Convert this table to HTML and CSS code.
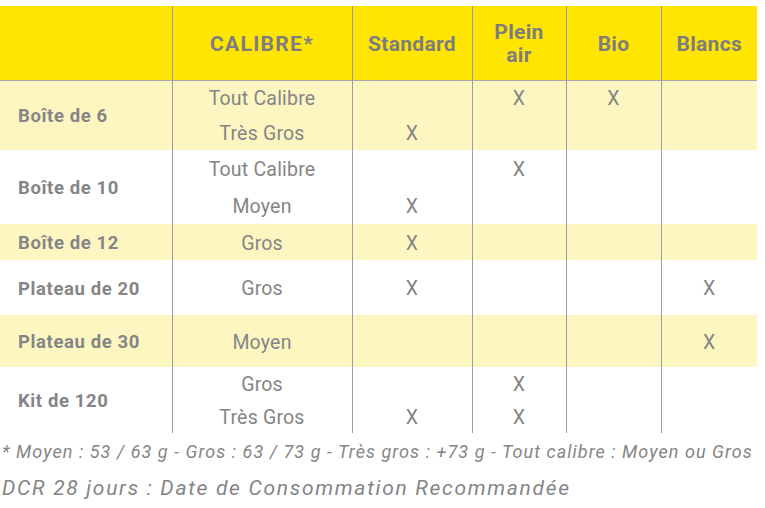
FILE: index.html
```html
<!DOCTYPE html>
<html lang="fr">
<head>
<meta charset="utf-8">
<title>Calibres</title>
<link rel="stylesheet" href="styles.css">
</head>
<body>
<div class="page">
<table class="grid">
  <colgroup>
    <col class="c1"><col class="c2"><col class="c3"><col class="c4"><col class="c5"><col class="c6">
  </colgroup>
  <thead>
    <tr class="head">
      <th></th><th class="cal">CALIBRE*</th><th>Standard</th><th>Plein<br>air</th><th>Bio</th><th>Blancs</th>
    </tr>
  </thead>
  <tbody class="yel">
    <tr class="r35"><td class="label" rowspan="2">Boîte de 6</td><td>Tout Calibre</td><td></td><td>X</td><td>X</td><td></td></tr>
    <tr class="r35"><td>Très Gros</td><td>X</td><td></td><td></td><td></td></tr>
  </tbody>
  <tbody class="wht">
    <tr class="r37"><td class="label" rowspan="2">Boîte de 10</td><td>Tout Calibre</td><td></td><td>X</td><td></td><td></td></tr>
    <tr class="r37"><td>Moyen</td><td>X</td><td></td><td></td><td></td></tr>
  </tbody>
  <tbody class="yel">
    <tr class="r36"><td class="label">Boîte de 12</td><td>Gros</td><td>X</td><td></td><td></td><td></td></tr>
  </tbody>
  <tbody class="wht">
    <tr class="r55"><td class="label">Plateau de 20</td><td>Gros</td><td>X</td><td></td><td></td><td>X</td></tr>
  </tbody>
  <tbody class="yel">
    <tr class="r52"><td class="label">Plateau de 30</td><td>Moyen</td><td></td><td></td><td></td><td>X</td></tr>
  </tbody>
  <tbody class="wht">
    <tr class="r33"><td class="label" rowspan="2">Kit de 120</td><td>Gros</td><td></td><td>X</td><td></td><td></td></tr>
    <tr class="r33"><td>Très Gros</td><td>X</td><td>X</td><td></td><td></td></tr>
  </tbody>
</table>
<p class="note">* Moyen : 53 / 63 g - Gros : 63 / 73 g - Très gros : +73 g - Tout calibre : Moyen ou Gros</p>
<p class="dcr">DCR 28 jours : Date de Consommation Recommandée</p>
</div>
</body>
</html>
```
FILE: styles.css
```css
html, body {
  margin: 0;
  padding: 0;
  background: #ffffff;
}

.page {
  padding-top: 6px;
  font-family: Roboto, "Liberation Sans", sans-serif;
  color: #858587;
}

.grid {
  width: 757px;
  border-collapse: collapse;
  table-layout: fixed;
}

.c1 { width: 172px; }
.c2 { width: 180px; }
.c3 { width: 120px; }
.c4 { width: 94px; }
.c5 { width: 95px; }
.c6 { width: 96px; }

.grid th,
.grid td {
  padding: 0;
  text-align: center;
  vertical-align: middle;
  border-left: 1px solid #9c9cab;
}

.grid th:first-child,
.grid td.label {
  border-left: none;
}

.head {
  height: 74px;
  background: #ffe500;
  border-bottom: 1px solid #a8a8a8;
}

.head th {
  font-size: 21px;
  font-weight: 700;
  line-height: 23px;
  color: #7d7d80;
  letter-spacing: 0.3px;
  padding-top: 3px;
}

.head th.cal {
  letter-spacing: 1.3px;
}

.yel { background: #fef6c1; }
.wht { background: #ffffff; }

.grid td {
  font-size: 19.5px;
  font-weight: 400;
  letter-spacing: 0.2px;
  line-height: 20px;
  padding-top: 3px;
}

.grid td.label {
  text-align: left;
  padding-left: 18px;
  padding-top: 2px;
  font-size: 18.5px;
  font-weight: 700;
  letter-spacing: 0.6px;
}

.r33 { height: 33px; }
.r35 { height: 35px; }
.r36 { height: 36px; }
.r37 { height: 37px; }
.r52 { height: 52px; }
.r55 { height: 55px; }

.note {
  margin: 8px 0 0 2px;
  font-style: italic;
  font-size: 18px;
  line-height: 22px;
  letter-spacing: 1.05px;
  white-space: nowrap;
}

.dcr {
  margin: 13px 0 0 2px;
  font-style: italic;
  font-size: 21px;
  line-height: 24px;
  letter-spacing: 1.7px;
  white-space: nowrap;
}
```
